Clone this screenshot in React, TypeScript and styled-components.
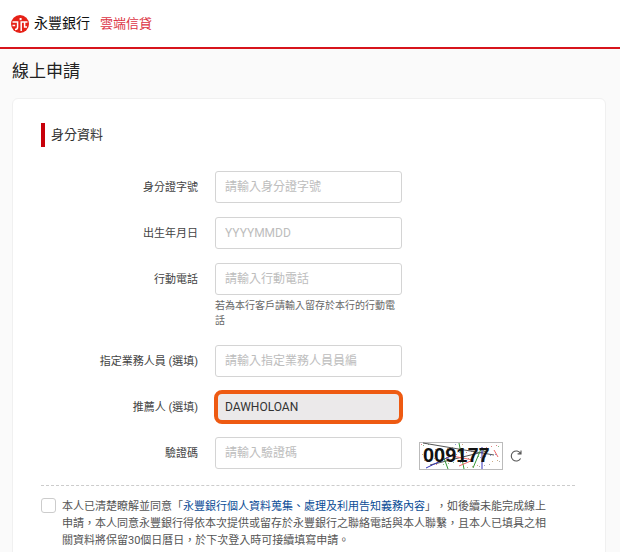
import React, { useId } from "react";
import styled, { createGlobalStyle } from "styled-components";

const GlobalStyle = createGlobalStyle`
  *, *::before, *::after { box-sizing: border-box; }
  body {
    margin: 0;
    background: #fafafa;
    color: #555;
    font: 11px/17px Roboto, "Noto Sans CJK TC", sans-serif;
    text-spacing-trim: space-all;
  }
`;

const Header = styled.header`
  display: flex;
  align-items: center;
  height: 49px;
  padding: 0 11px;
  background: #fff;
  border-bottom: 2px solid #d7141c;
`;

const Brand = styled.a`
  display: flex;
  align-items: center;
  gap: 5px;
  color: #111;
  font-size: 14px;
  text-decoration: none;
`;

const Product = styled.span`
  margin-left: 10px;
  color: #dc3545;
  font-size: 13px;
`;

const Main = styled.main`
  padding: 0 14px 24px 12px;
`;

const PageTitle = styled.h1`
  margin: 0;
  padding: 10px 0 15px;
  color: #222;
  font-size: 17px;
  font-weight: 400;
  line-height: 24px;
`;

const Card = styled.form`
  padding: 24px 30px 24px 28px;
  background: #fff;
  border: 1px solid #f0f0f0;
  border-radius: 6px;
`;

const SectionTitle = styled.h2`
  margin: 0 0 24px;
  padding-left: 6px;
  border-left: 4px solid #c8000a;
  color: #333;
  font-size: 13px;
  font-weight: 400;
  line-height: 24px;
`;

const Fields = styled.div`
  display: grid;
  gap: 14px;
`;

const Row = styled.div`
  display: grid;
  grid-template-columns: 157px 187px auto;
  column-gap: 17px;
  justify-content: start;
  align-items: start;
`;

const Label = styled.label`
  color: #444;
  line-height: 34px;
  height: 32px;
  text-align: right;
`;

const TextInput = styled.input<{ $highlighted?: boolean }>`
  display: block;
  width: 100%;
  height: 32px;
  padding: 0 9px;
  border: 1px solid #d4d4d4;
  border-radius: ${(p) => (p.$highlighted ? "7px" : "3px")};
  outline: ${(p) => (p.$highlighted ? "4px solid #ee5a12" : "none")};
  outline-offset: -3px;
  background: ${(p) => (p.$highlighted ? "#ebe9ea" : "#fff")};
  color: #333;
  font: inherit;
  font-size: 12px;
  &::placeholder { color: #bdbdbd; opacity: 1; }
`;

const Hint = styled.p`
  margin: 3px 0 3px;
  color: #666;
  font-size: 10px;
  line-height: 15px;
`;

const CaptchaGroup = styled.div`
  display: flex;
  align-items: center;
  gap: 7px;
  height: 38px;
  margin-bottom: -6px;
`;

const RefreshButton = styled.button`
  display: flex;
  padding: 0;
  border: 0;
  background: none;
  color: #555;
  cursor: pointer;
`;

const Divider = styled.hr`
  margin: 16px 0 12px;
  border: 0;
  border-top: 1px dashed #ccc;
`;

const Consent = styled.div`
  display: flex;
  align-items: flex-start;
  gap: 6px;
`;

const Checkbox = styled.input`
  appearance: none;
  flex: none;
  width: 15px;
  height: 15px;
  margin: 0;
  border: 1px solid #ccc;
  border-radius: 3px;
  background: #fff;
  &:checked { background: #c8000a; }
`;

const ConsentText = styled.label`
  max-width: 490px;
  a { color: #0a4c96; text-decoration: none; }
`;

function BankLogo() {
  return (
    <svg width="18" height="18" viewBox="0 0 18 18" aria-hidden="true">
      <circle cx="9" cy="9" r="9" fill="#e62117" />
      <g fill="none" stroke="#fff" strokeWidth="1.5">
        <path d="M1.5 7H6.6V12Q6.6 14.5 4 14.5M1.5 10.5H4.2" />
        <path d="M16.5 7H10.2V16M13.6 7V12H16" />
        <path d="M9.6 3V5.2" strokeWidth="2" />
      </g>
    </svg>
  );
}

const speckColors = ["#c33", "#383", "#45b", "#a73", "#777"];
const specks = Array.from({ length: 56 }, (_, i) => ({
  x: 2 + ((i * 37) % 80),
  y: 2 + ((i * 17 + Math.floor(i / 7) * 5) % 24),
  color: speckColors[i % speckColors.length],
}));

function Captcha() {
  return (
    <svg width="84" height="28" viewBox="0 0 84 28" role="img" aria-label="009177">
      <rect x="0.5" y="0.5" width="83" height="27" fill="#fff" stroke="#bbb" />
      {specks.map((s, i) => (
        <rect key={i} x={s.x} y={s.y} width="1" height="1" fill={s.color} opacity="0.6" />
      ))}
      <g fill="none">
        <path d="M4 1 75 13M11 23l57-14" stroke="#555" />
        <path d="M7 26 36 12M63 5v22" stroke="#33b" />
        <path d="M22 8l7 19M40 1l5 26M62 7l-8 19" stroke="#393" />
        <path d="M33 14l21 4-14 6M75 8l4 7" stroke="#e66" />
      </g>
      <text x="4" y="20" fontFamily="Liberation Sans, sans-serif" fontSize="20" fontWeight="700" fill="#111">
        009177
      </text>
    </svg>
  );
}

function RefreshIcon() {
  return (
    <svg width="13" height="14" viewBox="0 0 13 14" fill="none" stroke="currentColor" strokeWidth="1.1" aria-hidden="true">
      <path d="M10.6 4.5A5 5 0 1 0 10.6 9.5M11 1.5V4.9H7.6" />
    </svg>
  );
}

interface FieldProps {
  label: string;
  placeholder?: string;
  defaultValue?: string;
  highlighted?: boolean;
  hint?: string;
  children?: React.ReactNode;
}

function Field({ label, placeholder, defaultValue, highlighted, hint, children }: FieldProps) {
  const id = useId();
  return (
    <Row>
      <Label htmlFor={id}>{label}</Label>
      <div>
        <TextInput
          id={id}
          type="text"
          placeholder={placeholder}
          defaultValue={defaultValue}
          readOnly={highlighted}
          $highlighted={highlighted}
        />
        {hint && <Hint>{hint}</Hint>}
      </div>
      {children}
    </Row>
  );
}

export default function App() {
  return (
    <>
      <GlobalStyle />
      <Header>
        <Brand href="#">
          <BankLogo />
          永豐銀行
        </Brand>
        <Product>雲端信貸</Product>
      </Header>
      <Main>
        <PageTitle>線上申請</PageTitle>
        <Card>
          <SectionTitle>身分資料</SectionTitle>
          <Fields>
            <Field label="身分證字號" placeholder="請輸入身分證字號" />
            <Field label="出生年月日" placeholder="YYYYMMDD" />
            <Field
              label="行動電話"
              placeholder="請輸入行動電話"
              hint="若為本行客戶請輸入留存於本行的行動電話"
            />
            <Field label="指定業務人員 (選填)" placeholder="請輸入指定業務人員員編" />
            <Field label="推薦人 (選填)" defaultValue="DAWHOLOAN" highlighted />
            <Field label="驗證碼" placeholder="請輸入驗證碼">
              <CaptchaGroup>
                <Captcha />
                <RefreshButton type="button" aria-label="重新產生驗證碼">
                  <RefreshIcon />
                </RefreshButton>
              </CaptchaGroup>
            </Field>
          </Fields>
          <Divider />
          <Consent>
            <Checkbox id="consent" type="checkbox" />
            <ConsentText htmlFor="consent">
              本人已清楚瞭解並同意「<a href="#">永豐銀行個人資料蒐集、處理及利用告知義務內容</a>」，如後續未能完成線上申請，本人同意永豐銀行得依本次提供或留存於永豐銀行之聯絡電話與本人聯繫，且本人已填具之相關資料將保留30個日曆日，於下次登入時可接續填寫申請。
            </ConsentText>
          </Consent>
        </Card>
      </Main>
    </>
  );
}
